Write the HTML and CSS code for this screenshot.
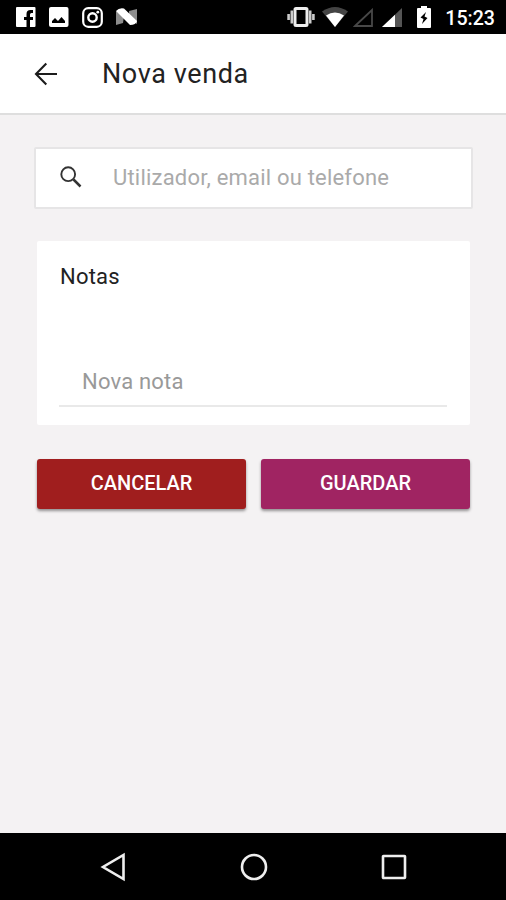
FILE: index.html
```
<!DOCTYPE html>
<html lang="pt">
<head>
    <meta charset="UTF-8">
    <meta name="viewport" content="width=device-width, initial-scale=1.0">
    <title>Nova venda</title>
    <link rel="stylesheet" href="styles.css">
</head>
<body>
    <div class="status-bar">
        <div class="notifications">
            <svg width="20" height="20" viewBox="0 0 20 20">
                <path fill="#fff" d="M1 0h17.500a1 1 0 0 1 1 1v18a1 1 0 0 1-1 1H14v-7h3v-3h-3V7.500q0-1.500 1.500-1.500H17V3h-2.500q-4 0-4 4v3H8v3h2.500v7H1a1 1 0 0 1-1-1V1a1 1 0 0 1 1-1z"/>
            </svg>
            <svg width="20" height="20" viewBox="0 0 20 20">
                <rect width="19.500" height="20" rx="2" fill="#fff"/>
                <path d="M3 16v-2l3-3 3 3 3.500-4 3.500 4v2z"/>
            </svg>
            <svg width="21" height="21" viewBox="0 0 21 21" fill="none" stroke="#fff">
                <rect x="1.200" y="1.200" width="18.600" height="18.600" rx="5" stroke-width="2.200"/>
                <circle cx="10.500" cy="10.500" r="4.200" stroke-width="2.400"/>
                <circle cx="15.800" cy="5.200" r="1.400" fill="#fff" stroke="none"/>
            </svg>
            <svg width="21" height="18" viewBox="0 0 21 18">
                <path fill="#8c8c8c" d="M0 3l8 5-1 7-7 2zM13 3l8-2v15l-8-5z"/>
                <path fill="#fff" d="M0 3Q3-.5 8 .5L21 13q-1 4-7 4z"/>
            </svg>
        </div>
        <div class="system">
            <svg class="vibrate" width="28" height="20" viewBox="0 0 28 20">
                <rect x="8" y="1.500" width="12" height="17" rx="1" fill="none" stroke="#eee" stroke-width="3"/>
                <path stroke="#ccc" stroke-width="2.600" d="M4.800 3.500v13M1.600 7v6M23.200 3.500v13M26.400 7v6"/>
            </svg>
            <svg class="wifi" width="26" height="20" viewBox="0 0 26 20">
                <path fill="#444" d="M0 4.500q13-9 26 0L13 20z"/>
                <path fill="#fff" d="M4 8.500q9-6 18 0L13 20z"/>
            </svg>
            <svg class="signal-off" width="20" height="19" viewBox="0 0 20 19">
                <path fill="none" stroke="#484848" stroke-width="1.800" d="M2 18 19 2v16z"/>
            </svg>
            <svg class="signal" width="20" height="19" viewBox="0 0 20 19">
                <path fill="#555" d="M0 19 20 0v19z"/>
                <path fill="#fff" d="M0 19 13 6.700V19z"/>
            </svg>
            <svg class="battery" width="14" height="22" viewBox="0 0 14 22">
                <path fill="#fff" d="M4 0h6v2h3q1 0 1 1v18q0 1-1 1H1q-1 0-1-1V3q0-1 1-1h3z"/>
                <path d="M9 6 3.500 11.500l3 1.500L5 18l5.500-6-3-1.500z"/>
            </svg>
            <span class="clock">15:23</span>
        </div>
    </div>

    <header class="app-bar">
        <svg width="24" height="24" viewBox="0 0 24 24" fill="none" stroke="#1c1c1c" stroke-width="2.100">
            <path d="M23 12H2.500M12.300 1.500 2 12l10.300 10.500"/>
        </svg>
        <h1>Nova venda</h1>
    </header>

    <main>
        <div class="search">
            <svg width="22" height="22" viewBox="0 0 22 22" fill="none" stroke="#333">
                <circle cx="8.200" cy="8.200" r="6.900" stroke-width="1.900"/>
                <path stroke-width="2.500" d="m13.500 13.500 7 7"/>
            </svg>
            <span>Utilizador, email ou telefone</span>
        </div>

        <div class="notes">
            <h2>Notas</h2>
            <div class="note-field">Nova nota</div>
        </div>

        <div class="actions">
            <button class="cancel">CANCELAR</button>
            <button class="save">GUARDAR</button>
        </div>
    </main>

    <nav class="nav-bar">
        <svg width="26" height="30" viewBox="0 0 26 30">
            <path d="M23.500 3v24L3 15z"/>
        </svg>
        <svg width="28" height="28" viewBox="0 0 28 28">
            <circle cx="14" cy="14" r="12"/>
        </svg>
        <svg width="26" height="26" viewBox="0 0 26 26">
            <rect x="2" y="2" width="22" height="22" rx=".5"/>
        </svg>
    </nav>
</body>
</html>
```
FILE: styles.css
```
* {
    box-sizing: border-box;
}
body {
    display: flex;
    flex-direction: column;
    height: 100vh;
    margin: 0;
    background-color: #f4f2f3;
    font-family: Roboto, sans-serif;
    color: #222;
}
h1,
h2 {
    margin: 0;
}
svg {
    display: block;
    flex: none;
}

/* status bar */
.status-bar {
    display: flex;
    justify-content: space-between;
    align-items: center;
    height: 34px;
    padding: 0 11px 0 16px;
    background-color: #000;
    color: #fff;
}
.notifications,
.system {
    display: flex;
    align-items: center;
}
.notifications {
    gap: 13px;
}
.vibrate {
    margin-right: 7px;
}
.wifi {
    margin-right: 5px;
}
.signal-off {
    margin-right: 9px;
}
.signal {
    margin-right: 15px;
}
.battery {
    margin-right: 14px;
}
.clock {
    padding-top: 4px;
    font-size: 19.6px;
    font-weight: 500;
    line-height: 30px;
}

.app-bar {
    display: flex;
    align-items: center;
    gap: 44px;
    height: 81px;
    padding: 0 34px;
    border-bottom: 2px solid #dedede;
    background-color: #fff;
}
.app-bar h1 {
    font-size: 27px;
    font-weight: 400;
    letter-spacing: .6px;
}

main {
    flex: 1;
    padding: 32px 36px 0 37px;
}
.search {
    display: flex;
    align-items: center;
    gap: 31px;
    height: 62px;
    margin: 0 -3px;
    padding: 0 24px 2px;
    border: 2px solid #e6e5e6;
    border-radius: 2px;
    background-color: #fff;
    color: #aaa;
    font-size: 22px;
    letter-spacing: .2px;
}
.notes {
    height: 184px;
    margin-top: 32px;
    padding: 22px 23px 0 22px;
    border-radius: 2px;
    background-color: #fff;
}
.notes h2 {
    padding-left: 1px;
    font-size: 22px;
    font-weight: 400;
    line-height: 28px;
    letter-spacing: .2px;
}
.note-field {
    margin-top: 76px;
    padding: 1px 23px 9px;
    border-bottom: 2px solid #e9e9e9;
    color: #999;
    font-size: 22px;
    line-height: 28px;
    letter-spacing: .2px;
}

.actions {
    display: flex;
    gap: 15px;
    margin-top: 34px;
}
.actions button {
    flex: 1;
    height: 50px;
    padding: 0 0 2px;
    border: 0;
    border-radius: 3px;
    box-shadow: 0 2px 3px rgba(0, 0, 0, .4);
    color: #fff;
    font-family: inherit;
    font-size: 20px;
    font-weight: 500;
}
.actions .cancel {
    background-color: #a01e1e;
}
.actions .save {
    background-color: #a02462;
}

/* android navigation */
.nav-bar {
    display: flex;
    justify-content: space-between;
    align-items: center;
    height: 67px;
    padding: 0 99px 0 100px;
    background-color: #000;
}
.nav-bar svg {
    fill: none;
    stroke: #eee;
    stroke-width: 2.6;
}
```
